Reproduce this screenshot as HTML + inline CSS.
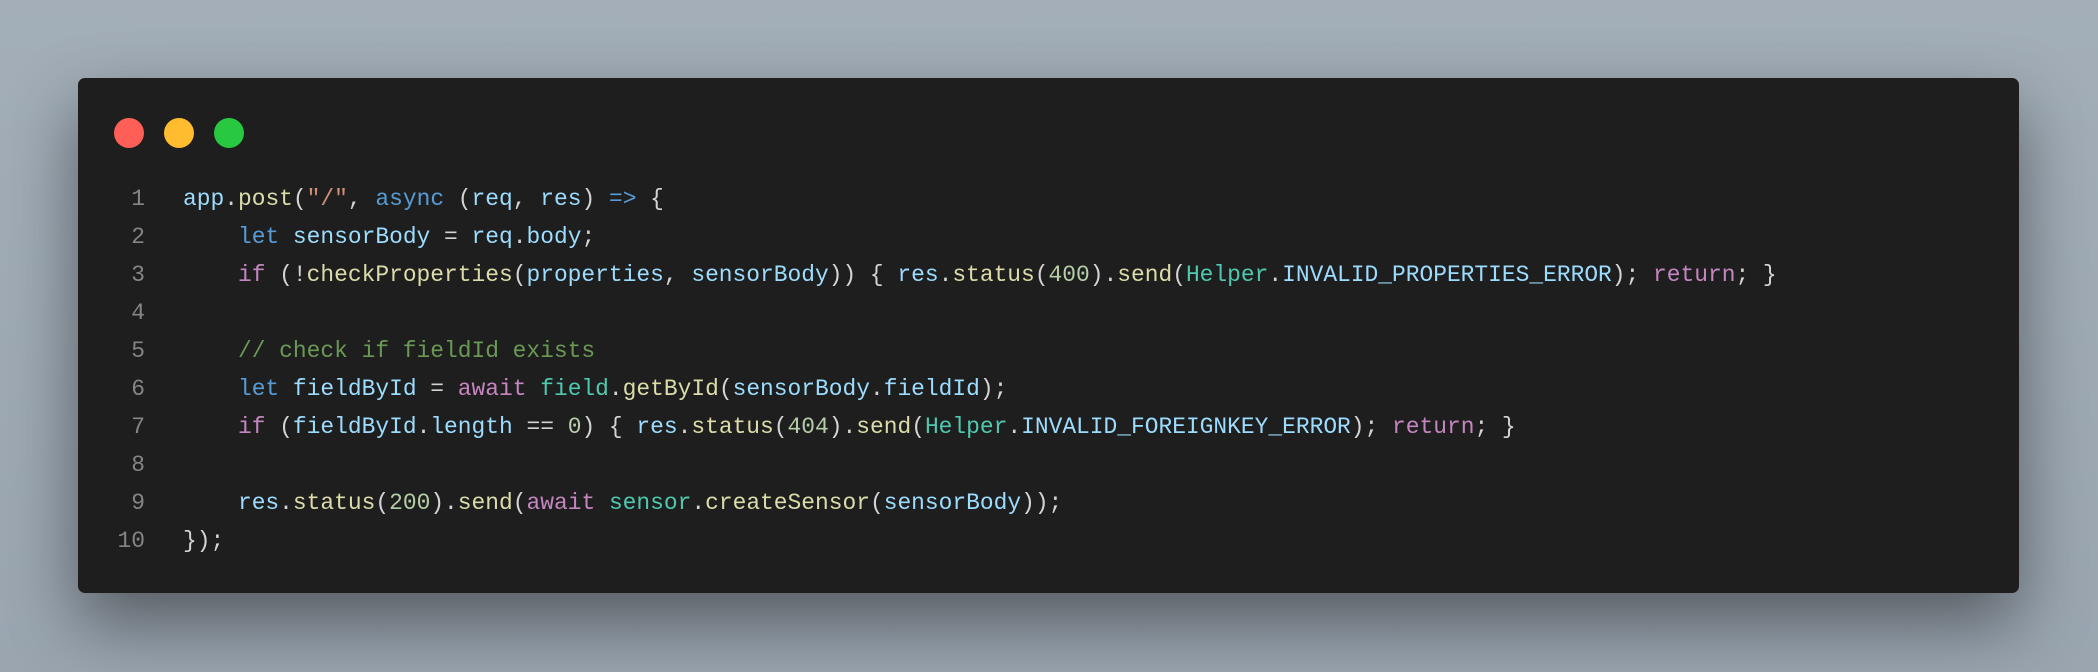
<!DOCTYPE html>
<html><head><meta charset="utf-8"><style>
html,body{margin:0;padding:0}
body{width:2098px;height:672px;background:linear-gradient(180deg,#a3aeb8,#9aa5b0);position:relative;overflow:hidden}
.win{position:absolute;left:78px;top:78px;width:1941px;height:515px;background:#1e1e1e;border-radius:7px;box-shadow:0 30px 70px rgba(0,0,0,0.45)}
.dot{position:absolute;top:40px;width:30px;height:30px;border-radius:50%}
pre{position:absolute;left:0;top:102px;margin:0;font-family:"Liberation Mono",monospace;font-size:22.9px;line-height:38px;color:#d4d4d4}
.ln{display:inline-block;width:67px;text-align:right;color:#858585;margin-right:38px}
.v{color:#9cdcfe}.f{color:#dcdcaa}.k{color:#569cd6}.c{color:#c586c0}.s{color:#ce9178}.m{color:#6a9955}.t{color:#4ec9b0}.n{color:#b5cea8}
</style></head><body>
<div class="win">
<div class="dot" style="left:36px;background:#ff5f57"></div>
<div class="dot" style="left:86px;background:#febc2e"></div>
<div class="dot" style="left:136px;background:#28c840"></div>
<pre><span class="ln">1</span><span class="v">app</span>.<span class="f">post</span>(<span class="s">"/"</span>, <span class="k">async</span> (<span class="v">req</span>, <span class="v">res</span>) <span class="k">=&gt;</span> {
<span class="ln">2</span>    <span class="k">let</span> <span class="v">sensorBody</span> = <span class="v">req</span>.<span class="v">body</span>;
<span class="ln">3</span>    <span class="c">if</span> (!<span class="f">checkProperties</span>(<span class="v">properties</span>, <span class="v">sensorBody</span>)) { <span class="v">res</span>.<span class="f">status</span>(<span class="n">400</span>).<span class="f">send</span>(<span class="t">Helper</span>.<span class="v">INVALID_PROPERTIES_ERROR</span>); <span class="c">return</span>; }
<span class="ln">4</span>
<span class="ln">5</span>    <span class="m">// check if fieldId exists</span>
<span class="ln">6</span>    <span class="k">let</span> <span class="v">fieldById</span> = <span class="c">await</span> <span class="t">field</span>.<span class="f">getById</span>(<span class="v">sensorBody</span>.<span class="v">fieldId</span>);
<span class="ln">7</span>    <span class="c">if</span> (<span class="v">fieldById</span>.<span class="v">length</span> == <span class="n">0</span>) { <span class="v">res</span>.<span class="f">status</span>(<span class="n">404</span>).<span class="f">send</span>(<span class="t">Helper</span>.<span class="v">INVALID_FOREIGNKEY_ERROR</span>); <span class="c">return</span>; }
<span class="ln">8</span>
<span class="ln">9</span>    <span class="v">res</span>.<span class="f">status</span>(<span class="n">200</span>).<span class="f">send</span>(<span class="c">await</span> <span class="t">sensor</span>.<span class="f">createSensor</span>(<span class="v">sensorBody</span>));
<span class="ln">10</span>});</pre>
</div>
</body></html>
